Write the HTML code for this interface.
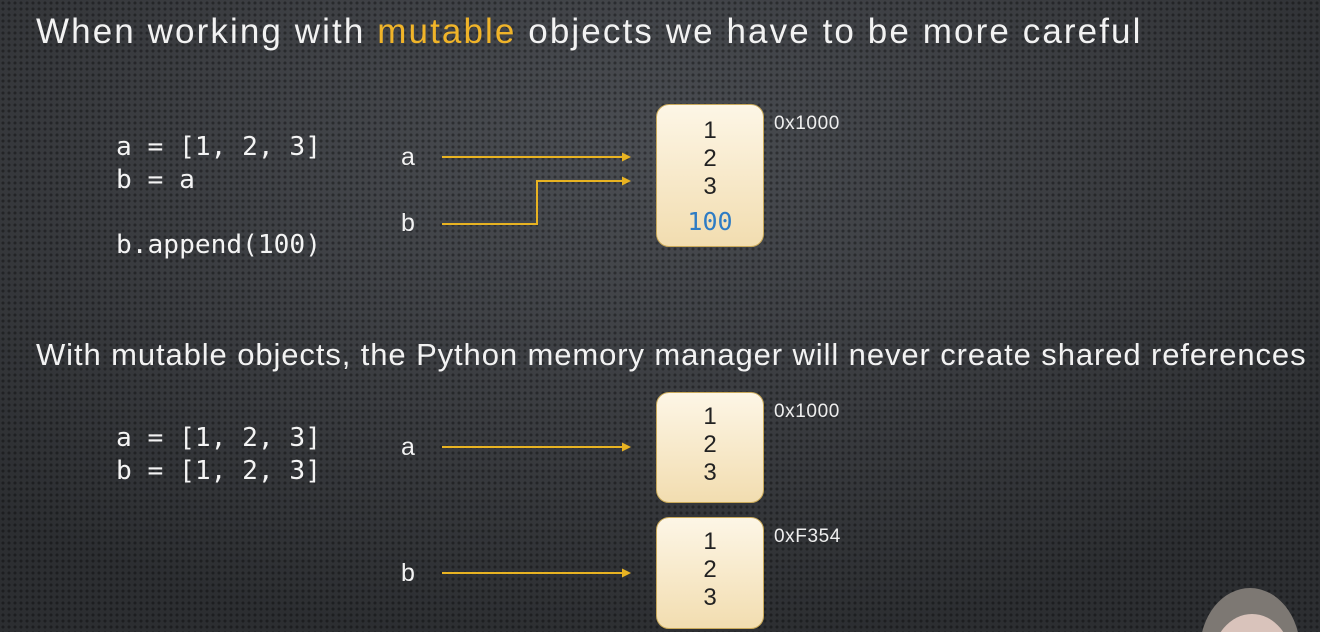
<!DOCTYPE html>
<html><head><meta charset="utf-8"><style>
html,body{margin:0;padding:0}
body{width:1320px;height:632px;overflow:hidden;position:relative;
background:radial-gradient(ellipse 900px 500px at 620px 150px,#4a4d52 0%,#3a3c40 55%,#2c2e31 100%);
font-family:"Liberation Sans","DejaVu Sans",sans-serif;color:#f2f2f2}
body:before{content:"";position:absolute;inset:0;
background-image:radial-gradient(circle,rgba(0,0,0,.35) 1.3px,transparent 1.8px);
background-size:6px 6px}
.t{position:absolute;white-space:nowrap;line-height:1}
.code{font-family:"DejaVu Sans Mono","Liberation Mono",monospace;font-size:26.2px;color:#f4f4f4}
.lbl{font-size:25px}
.box{position:absolute;left:656px;width:106px;border-radius:13px;border:1px solid #c9a95a;
background:linear-gradient(#fdf6e6,#f2ddb0);text-align:center;color:#222;font-size:24px;overflow:hidden}
.box div{position:absolute;left:0;right:0;line-height:1}
.addr{font-size:19px;color:#eee;letter-spacing:0.6px}
</style></head><body>
<div class="t" style="left:36px;top:14px;font-size:35px;letter-spacing:2.1px">When working with <span style="color:#f0b429">mutable</span> objects we have to be more careful</div>
<div class="t code" style="left:116px;top:134px">a = [1, 2, 3]</div>
<div class="t code" style="left:116px;top:167px">b = a</div>
<div class="t code" style="left:116px;top:232px">b.append(100)</div>
<div class="t lbl" style="left:401px;top:145px">a</div>
<div class="t lbl" style="left:401px;top:211px">b</div>

<div class="box" style="top:104px;height:141px">
<div style="top:14px">1</div><div style="top:42px">2</div><div style="top:70px">3</div>
<div style="top:104px;color:#2e7cc4;font-family:'DejaVu Sans Mono',monospace;font-size:25px">100</div></div>
<div class="t addr" style="left:774px;top:114px">0x1000</div>

<div class="t" style="left:36px;top:339px;font-size:31px;letter-spacing:0.9px">With mutable objects, the Python memory manager will never create shared references</div>

<div class="t code" style="left:116px;top:425px">a = [1, 2, 3]</div>
<div class="t code" style="left:116px;top:458px">b = [1, 2, 3]</div>
<div class="t lbl" style="left:401px;top:435px">a</div>
<div class="t lbl" style="left:401px;top:561px">b</div>

<div class="box" style="top:392px;height:109px">
<div style="top:12px">1</div><div style="top:40px">2</div><div style="top:68px">3</div></div>
<div class="t addr" style="left:774px;top:402px">0x1000</div>
<div class="box" style="top:517px;height:110px">
<div style="top:12px">1</div><div style="top:40px">2</div><div style="top:68px">3</div></div>
<div class="t addr" style="left:774px;top:527px">0xF354</div>

<svg width="1320" height="632" style="position:absolute;left:0;top:0;overflow:hidden" fill="none" stroke="#e8b322" stroke-width="2">
<path d="M442 157H624"/><path d="M442 224H537V181H624"/>
<path d="M442 447H624"/><path d="M442 573H624"/>
<g fill="#e8b322" stroke="none">
<path d="M631 157l-9-4.5v9z"/><path d="M631 181l-9-4.5v9z"/>
<path d="M631 447l-9-4.5v9z"/><path d="M631 573l-9-4.5v9z"/>
</g>
<ellipse cx="1250" cy="650" rx="50" ry="62" fill="#7d7873" stroke="none"/>
<ellipse cx="1252" cy="662" rx="40" ry="48" fill="#d9c3bb" stroke="none"/>
</svg>
</body></html>
